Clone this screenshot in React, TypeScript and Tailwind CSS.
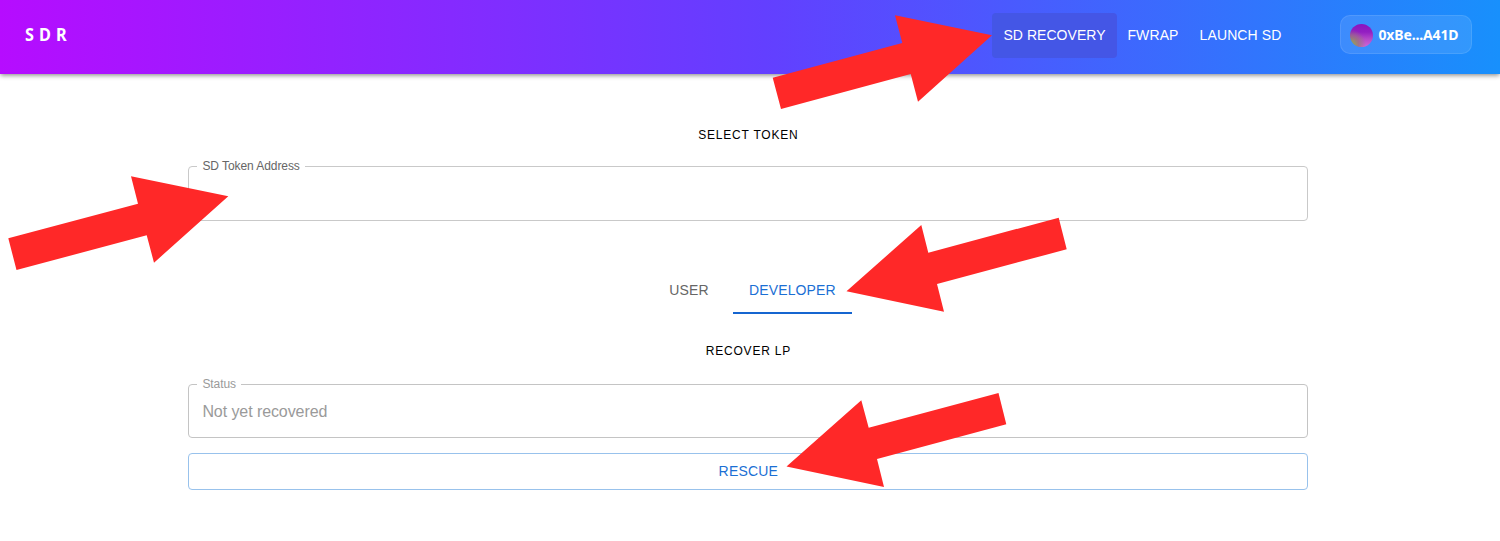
import React from "react";

const navItems = [
  { label: "SD RECOVERY", width: "w-[125px]", tracking: "tracking-[0.04px]", active: true },
  { label: "FWRAP", width: "w-[72px]", tracking: "tracking-[0.1px]", active: false },
  { label: "LAUNCH SD", width: "w-[103px]", tracking: "tracking-[0.1px]", active: false },
];

const arrows = [
  "772.7,77.7 902.3,43 895,15.3 992,35.3 918,101.7 910.7,74 781,109",
  "8.3,238.3 138,203.7 131,176.3 228.3,196.3 154,262.7 146.7,235.3 16.5,270",
  "1058.7,217.7 928.3,252.7 921.3,225 846.5,291.3 944,311.7 937,284 1066.7,249.3",
  "998.5,393 868.7,427.7 861.3,400.3 786.5,466.5 884,487 877,459 1006.3,424.3",
];

function Header() {
  return (
    <header className="flex h-[74px] items-start bg-[linear-gradient(90deg,#b60cff,#633fff_51%,#1890fc)] pr-[28.5px] pl-[25px] text-white shadow-[0_2px_4px_-1px_rgba(0,0,0,0.3),0_2px_5px_rgba(0,0,0,0.2)]">
      <div className="mt-[22px] font-['Noto_Sans',sans-serif] text-[17.5px] leading-6 font-bold tracking-[5.4px]">
        <span className="inline-block origin-left scale-x-[0.93]">SDR</span>
      </div>
      <nav className="mt-[13px] ml-auto flex h-[45px] text-[14px]">
        {navItems.map((item) => (
          <a
            key={item.label}
            className={`flex items-center justify-center rounded-[4px] whitespace-nowrap ${item.width} ${item.tracking} ${item.active ? "bg-[#4456e6]" : ""}`}
          >
            {item.label}
          </a>
        ))}
      </nav>
      <button className="mt-[15px] ml-[47.5px] flex h-[39px] w-[132px] items-center rounded-[10px] border border-white/10 bg-white/10 pl-[9px] font-['Noto_Sans',sans-serif] text-[14px] font-bold">
        <span className="mt-px mr-[6px] size-[23px] shrink-0 rounded-full bg-[radial-gradient(circle_at_5%_90%,#8fae48_0%,rgba(150,120,120,0.8)_25%,transparent_50%),linear-gradient(#8a14bf_0%,#931fc2_35%,#b548c8_65%,#d066dc_100%)]" />
        <span className="tracking-[-0.15px]">0xBe...A41D</span>
      </button>
    </header>
  );
}

function OutlinedField({ label, value, muted }: { label: string; value?: string; muted?: boolean }) {
  return (
    <fieldset
      className={`w-[1120px] rounded-[4px] border px-2 ${muted ? "h-[60px] border-[#c4c4c4] text-[#9a9a9a]" : "h-[61px] border-[#c9c9c9] text-[#666666]"}`}
    >
      <legend className="h-3 px-[5px] text-[12px] leading-3 tracking-[-0.07px]">{label}</legend>
      <div className="px-[5px] pt-[10px] text-[16px] leading-6 tracking-[-0.08px]">{value}</div>
    </fieldset>
  );
}

export default function App() {
  return (
    <div className="relative h-[541px] overflow-hidden bg-white font-['Liberation_Sans',Arial,sans-serif]">
      <Header />
      <main className="ml-[188.4px] flex w-[1120px] flex-col items-center">
        <h2 className="mt-[53px] text-[12px] leading-4 tracking-[0.8px] text-black">SELECT TOKEN</h2>
        <div className="mt-[17px]">
          <OutlinedField label="SD Token Address" />
        </div>
        <div className="mt-[46px] flex h-[47px] text-[14px] tracking-[0.15px]">
          <button className="flex w-[88px] items-center justify-center text-[#666666]">USER</button>
          <button className="flex w-[119px] items-center justify-center border-b-2 border-[#1565d0] pt-[2px] text-[#1b6fd4]">
            DEVELOPER
          </button>
        </div>
        <h2 className="mt-[29px] text-[12px] leading-4 tracking-[0.8px] text-black">RECOVER LP</h2>
        <div className="mt-[19px]">
          <OutlinedField label="Status" value="Not yet recovered" muted />
        </div>
        <button className="mt-[15px] flex h-[37px] w-full items-center justify-center rounded-[4px] border border-[#98c2ec] text-[14px] tracking-[0.2px] text-[#1b6fd4]">
          RESCUE
        </button>
      </main>
      <svg className="pointer-events-none absolute inset-0" width="1500" height="541" viewBox="0 0 1500 541" fill="#ff2828">
        {arrows.map((points) => (
          <polygon key={points} points={points} />
        ))}
      </svg>
    </div>
  );
}
